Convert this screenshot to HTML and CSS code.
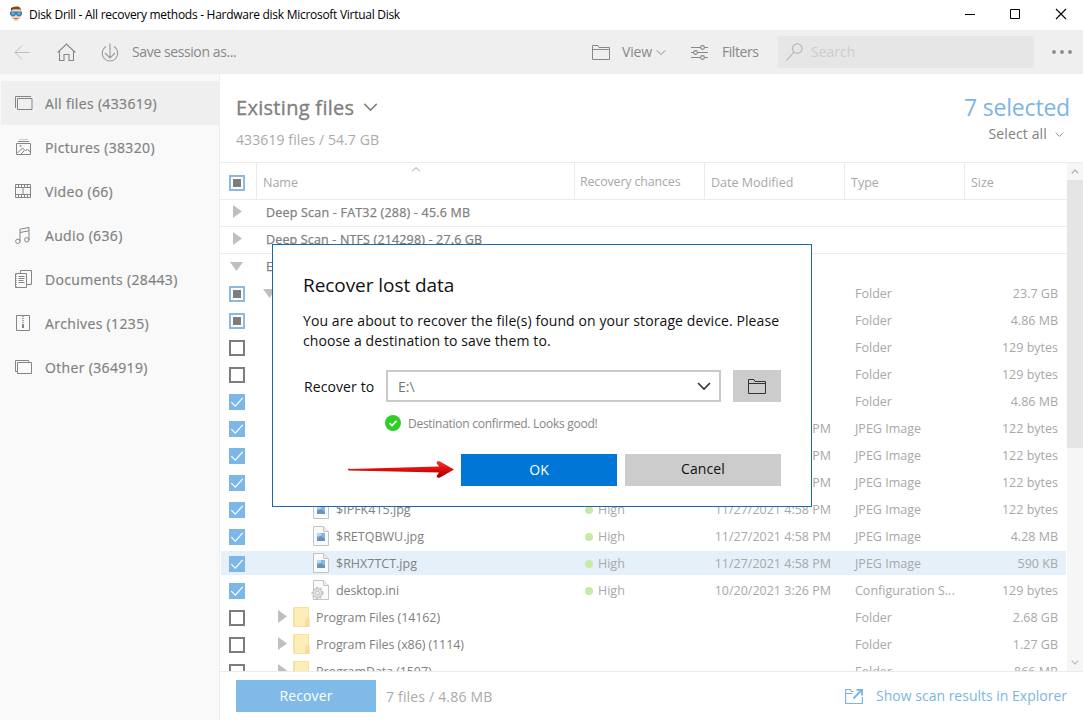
FILE: index.html
```html
<!DOCTYPE html>
<html lang="en">
<head>
<meta charset="utf-8">
<title>Disk Drill</title>
<link rel="stylesheet" href="styles.css">
</head>
<body>
<svg class="defs" width="0" height="0">
  <symbol id="tri-right" viewBox="0 0 9 13"><path d="M0 0v13l9-6.5z" fill="#bfbfbf"/></symbol>
  <symbol id="tri-down" viewBox="0 0 13 9"><path d="M0 0h13l-6.5 9z" fill="#bfbfbf"/></symbol>
  <symbol id="chev-down" viewBox="0 0 12 8"><path d="M1 1.5l5 5 5-5" fill="none" stroke="currentColor" stroke-width="1.2"/></symbol>
  <symbol id="tick" viewBox="0 0 16 16"><path d="M2.3 8.2l4 4 7.4-8.4" fill="none" stroke="#fff" stroke-width="1.2"/></symbol>
  <symbol id="jpg" viewBox="0 0 16 20">
    <path d="M.5.5h10l5 5v14H.5z" fill="#fafafa" stroke="#c4c4c4"/><path d="M10.500.5v5h5" fill="#eee" stroke="#c4c4c4"/>
    <path d="M4 7h8v8H4z" fill="#83b7e3"/><path d="M4 12l4-2 4 3v2H4z" fill="#6b93b8"/><path d="M4 7h4v3H4z" fill="#b3d7f2"/>
  </symbol>
  <symbol id="ini" viewBox="0 0 18 20">
    <path d="M2.500.5h10l5 5v14h-15z" fill="#fafafa" stroke="#c4c4c4"/><path d="M12.500.5v5h5" fill="#eee" stroke="#c4c4c4"/>
    <circle cx="6.500" cy="13" r="5" fill="#e3e3e3" stroke="#c0c0c0" stroke-width="2" stroke-dasharray="2.2 1.4"/><circle cx="6.500" cy="13" r="4.200" fill="#e4e4e4" stroke="#c6c6c6" stroke-width=".8"/><circle cx="6.500" cy="13" r="1.800" fill="#fff" stroke="#bcbcbc"/>
  </symbol>
  <symbol id="folder" viewBox="0 0 17 20">
    <path d="M.5.5h15v19H.5z" fill="#fdedb9" stroke="#f6e2a0"/><path d="M1 1h1v18H1z" fill="#f5e3a4"/><path d="M13 12l3-1 .5 8.500H12z" fill="#f7dfa0" stroke="#f3d994" stroke-width=".6"/>
  </symbol>
  <symbol id="folder-line" viewBox="0 0 18 15"><path d="M.5 14.500V.500h5.500l1 2h10.500v12zM.500 4.500h17" fill="none" stroke="currentColor"/></symbol>
</svg>

<div class="window">
  <header class="titlebar">
    <svg class="logo" width="12" height="16" viewBox="0 0 12 16">
      <path d="M1 4h10v6q0 3-5 5.500Q1 13 1 10z" fill="#f6d5b8"/><path d="M1 5V2q2-2 7-1.500Q11 1 11 5l-1-1.500H3z" fill="#7b4a22"/>
      <path d="M0 5.500h12v3q-1 2-3 2-2 0-3-2-1 2-3 2-2 0-3-2z" fill="#3c7fae"/><path d="M1.500 6.500h3v2h-3zM7.500 6.500h3v2h-3z" fill="#63bde8"/><path d="M4 12.500h4" stroke="#b9634a"/>
    </svg>
    <h1 class="title">Disk Drill - All recovery methods - Hardware disk Microsoft Virtual Disk</h1>
    <svg class="winctl" width="108" height="12" viewBox="0 0 108 12" fill="none" stroke="#000">
      <path d="M0 6.500h10M45.500 1.500h9v9h-9z"/><path d="M91 1l10 10M101 1L91 11" stroke-width="1.100"/>
    </svg>
  </header>

  <nav class="toolbar">
    <svg class="back" width="16" height="16" viewBox="0 0 16 16" fill="none" stroke="#bcbcbc"><path d="M15.500 8.500H1M8 1.500l-7 7 7 7"/></svg>
    <svg class="home" width="19" height="18" viewBox="0 0 19 18" fill="none" stroke="#888" stroke-width="1.100"><path d="M.7 9.500L9.500 1l8.800 8.500M2.500 8v9.500h4.500v-6h5v6h4.500V8"/></svg>
    <svg class="save" width="18" height="19" viewBox="0 0 18 19" fill="none" stroke="#999" stroke-width="1.100"><path d="M5 3.500a7.800 7.800 0 1 0 8 0M9 .5v14M4 10l5 5 5-5"/></svg>
    <span class="tool save-label">Save session as...</span>
    <svg class="view-ico" width="18" height="15"><use href="#folder-line"/></svg>
    <span class="tool view-label">View</span>
    <svg class="view-chev" width="10" height="7"><use href="#chev-down"/></svg>
    <svg class="filter-ico" width="17" height="15" viewBox="0 0 17 15" fill="none" stroke="#888" stroke-width="1.100"><path d="M0 2.500h9.500M13.500 2.500H17M0 7.500h2.500M6.500 7.500H17M0 12.500h9.500M13.500 12.500H17"/><circle cx="11.500" cy="2.500" r="1.900"/><circle cx="4.500" cy="7.500" r="1.900"/><circle cx="11.500" cy="12.500" r="1.900"/></svg>
    <span class="tool filter-label">Filters</span>
    <div class="search">
      <svg width="17" height="18" viewBox="0 0 17 18" fill="none" stroke="#b5b5b5" stroke-width="1.100"><circle cx="11.300" cy="5.500" r="4.800"/><path d="M8 9.200L.5 17.500"/></svg>
      <span>Search</span>
    </div>
    <svg class="more" width="20" height="4" viewBox="0 0 20 4" fill="#8a8a8a"><circle cx="2" cy="2" r="1.900"/><circle cx="10" cy="2" r="1.900"/><circle cx="18" cy="2" r="1.900"/></svg>
  </nav>

  <div class="body">
    <aside class="sidebar">
      <a class="cat active"><svg viewBox="0 0 18 18"><path d="M.5 14V2.500H16M2.500 4.500h14.500v11H2.500z"/></svg><span>All files (433619)</span></a>
      <a class="cat"><svg viewBox="0 0 18 18"><path d="M1.500 5.500h14v11h-14zM3 3.500h11M2.500 15l5-5 3 3 2-2 3 3.500M6 16l3-3"/><path d="M4 1.500h9" stroke="#ccc"/><circle cx="5.500" cy="8" r=".6"/></svg><span>Pictures (38320)</span></a>
      <a class="cat"><svg viewBox="0 0 18 18"><path d="M.5 2.500h15v13H.5zM.5 5.500h15M.5 12.500h15M8 5.500v7M3.500 2.500v3M6.500 2.500v3M9.500 2.500v3M12.500 2.500v3M3.500 12.500v3M6.500 12.500v3M9.500 12.500v3M12.500 12.500v3"/></svg><span>Video (66)</span></a>
      <a class="cat"><svg viewBox="0 0 18 18"><circle cx="2.800" cy="15.300" r="2.200"/><circle cx="11.800" cy="13.800" r="2.200"/><path d="M5 15.500V3.200L14 1.500V14M5 6.500L14 4.800"/></svg><span>Audio (636)</span></a>
      <a class="cat"><svg viewBox="0 0 18 18"><path d="M5.500 3.500v-3h11v14h-5M.5 3.500h11v14H.5z"/><path d="M3.500 6.500h6M3.500 8.500h6M3.500 10.500h5M3.500 12.500h6"/><path d="M1 4v13" stroke-dasharray="1 1"/></svg><span>Documents (28443)</span></a>
      <a class="cat"><svg viewBox="0 0 18 18"><path d="M1.500 1.500h13v15h-13z"/><path d="M8 2v9" stroke-dasharray="1 1" stroke-width="1.500"/><path d="M8 10v4" stroke-width="2"/></svg><span>Archives (1235)</span></a>
      <a class="cat"><svg viewBox="0 0 18 18"><path d="M2.500 13.500h-2v-11h13l1 2M2.500 4.500h14v11h-14z"/></svg><span>Other (364919)</span></a>
    </aside>

    <main class="main">
      <section class="heading">
        <div>
          <h2 class="heading-title"><span>Existing files</span><svg width="15" height="10"><use href="#chev-down"/></svg></h2>
          <p class="heading-sub">433619 files / 54.7 GB</p>
        </div>
        <div class="selection">
          <p class="selected">7 selected</p>
          <p class="select-all"><span>Select all</span><svg width="9" height="7"><use href="#chev-down"/></svg></p>
        </div>
      </section>

      <section class="table-wrap">
        <div class="table">
          <div class="thead">
            <div class="th"><i class="box part"></i></div>
            <div class="th name"><span>Name</span><svg class="sort" width="10" height="5" viewBox="0 0 10 5"><path d="M1 4.500l4-4 4 4" fill="none" stroke="#999" stroke-width=".9"/></svg></div>
            <div class="th"><span class="lift">Recovery chances</span></div>
            <div class="th">Date Modified</div>
            <div class="th">Type</div>
            <div class="th">Size</div>
          </div>
          <div class="row group"><svg class="gtri" width="9" height="13"><use href="#tri-right"/></svg><span>Deep Scan - FAT32 (288) - 45.6 MB</span></div>
          <div class="row group"><svg class="gtri" width="9" height="13"><use href="#tri-right"/></svg><span class="tight">Deep Scan - NTFS (214298) - 27.6 GB</span></div>
          <div class="row group open"><svg class="gtri down" width="13" height="9"><use href="#tri-down"/></svg><span>Existing</span></div>
          <div class="row"><i class="box part"></i><div class="fname"><svg class="tri0" width="13" height="9"><use href="#tri-down"/></svg></div><span class="chance"></span><span class="date"></span><span class="type">Folder</span><span class="size">23.7 GB</span></div>
          <div class="row"><i class="box part"></i><div class="fname"></div><span class="chance"></span><span class="date"></span><span class="type">Folder</span><span class="size">4.86 MB</span></div>
          <div class="row"><i class="box"></i><div class="fname"></div><span class="chance"></span><span class="date"></span><span class="type">Folder</span><span class="size">129 bytes</span></div>
          <div class="row"><i class="box"></i><div class="fname"></div><span class="chance"></span><span class="date"></span><span class="type">Folder</span><span class="size">129 bytes</span></div>
          <div class="row"><i class="box on"><svg><use href="#tick"/></svg></i><div class="fname"></div><span class="chance"></span><span class="date"></span><span class="type">Folder</span><span class="size">4.86 MB</span></div>
          <div class="row"><i class="box on"><svg><use href="#tick"/></svg></i><div class="fname"></div><span class="chance"></span><span class="date">11/27/2021 4:58 PM</span><span class="type">JPEG Image</span><span class="size">122 bytes</span></div>
          <div class="row"><i class="box on"><svg><use href="#tick"/></svg></i><div class="fname"></div><span class="chance"></span><span class="date">11/27/2021 4:58 PM</span><span class="type">JPEG Image</span><span class="size">122 bytes</span></div>
          <div class="row"><i class="box on"><svg><use href="#tick"/></svg></i><div class="fname"></div><span class="chance"></span><span class="date">11/27/2021 4:58 PM</span><span class="type">JPEG Image</span><span class="size">122 bytes</span></div>
          <div class="row"><i class="box on"><svg><use href="#tick"/></svg></i><div class="fname file"><svg width="16" height="20"><use href="#jpg"/></svg><span>$IPFK415.jpg</span></div><span class="chance high">High</span><span class="date">11/27/2021 4:58 PM</span><span class="type">JPEG Image</span><span class="size">122 bytes</span></div>
          <div class="row"><i class="box on"><svg><use href="#tick"/></svg></i><div class="fname file"><svg width="16" height="20"><use href="#jpg"/></svg><span>$RETQBWU.jpg</span></div><span class="chance high">High</span><span class="date">11/27/2021 4:58 PM</span><span class="type">JPEG Image</span><span class="size">4.28 MB</span></div>
          <div class="row current"><i class="box on"><svg><use href="#tick"/></svg></i><div class="fname file"><svg width="16" height="20"><use href="#jpg"/></svg><span>$RHX7TCT.jpg</span></div><span class="chance high">High</span><span class="date">11/27/2021 4:58 PM</span><span class="type">JPEG Image</span><span class="size">590 KB</span></div>
          <div class="row"><i class="box on"><svg><use href="#tick"/></svg></i><div class="fname file ini"><svg width="18" height="20"><use href="#ini"/></svg><span>desktop.ini</span></div><span class="chance high">High</span><span class="date">10/20/2021 3:26 PM</span><span class="type">Configuration S...</span><span class="size">129 bytes</span></div>
          <div class="row"><i class="box"></i><div class="fname dir"><svg class="tri" width="9" height="13"><use href="#tri-right"/></svg><svg width="17" height="20"><use href="#folder"/></svg><span>Program Files (14162)</span></div><span class="chance"></span><span class="date"></span><span class="type">Folder</span><span class="size">2.68 GB</span></div>
          <div class="row"><i class="box"></i><div class="fname dir"><svg class="tri" width="9" height="13"><use href="#tri-right"/></svg><svg width="17" height="20"><use href="#folder"/></svg><span>Program Files (x86) (1114)</span></div><span class="chance"></span><span class="date"></span><span class="type">Folder</span><span class="size">1.27 GB</span></div>
          <div class="row"><i class="box"></i><div class="fname dir"><svg class="tri" width="9" height="13"><use href="#tri-right"/></svg><svg width="17" height="20"><use href="#folder"/></svg><span>ProgramData (1507)</span></div><span class="chance"></span><span class="date"></span><span class="type">Folder</span><span class="size">866 MB</span></div>
        </div>
        <div class="scrollbar">
          <svg class="up" width="8" height="5" viewBox="0 0 8 5"><path d="M.7 4.300L4 1l3.300 3.300" fill="none" stroke="#aaa" stroke-width="1.200"/></svg>
          <div class="thumb"></div>
          <svg class="dn" width="8" height="5" viewBox="0 0 8 5"><path d="M.7.700L4 4 7.300.700" fill="none" stroke="#bbb" stroke-width="1.200"/></svg>
        </div>
      </section>

      <footer class="footer">
        <button class="recover">Recover</button>
        <span class="summary">7 files / 4.86 MB</span>
        <a class="explorer">
          <svg width="18" height="15" viewBox="0 0 18 15" fill="none" stroke="#7cb5e5" stroke-width="1.200"><path d="M8.500 2.500H6.500l-1-2H.6v14h16.800V8M.6 4.500h7"/><path d="M8.500 9.500L16 1.500M11.500.900h5.500v5.500" stroke-width="1.900"/></svg>
          <span>Show scan results in Explorer</span>
        </a>
      </footer>
    </main>
  </div>

  <div class="dialog">
    <h3>Recover lost data</h3>
    <p class="msg"><span>You are about to recover the file(s) found on your storage device. Please</span><br><span>choose a destination to save them to.</span></p>
    <div class="dest">
      <label>Recover to</label>
      <div class="combo"><span>E:\</span><svg width="14" height="9" viewBox="0 0 14 9"><path d="M1 1l6 6 6-6" fill="none" stroke="#333" stroke-width="1.600"/></svg></div>
      <div class="browse"><svg width="18" height="15"><use href="#folder-line"/></svg></div>
    </div>
    <div class="confirm"><svg width="16" height="16" viewBox="0 0 16 16"><circle cx="8" cy="8" r="8" fill="#2fce25"/><path d="M4.500 8.200l2.500 2.400 4.500-4.800" fill="none" stroke="#fff" stroke-width="1.700"/></svg><span>Destination confirmed. Looks good!</span></div>
    <div class="actions">
      <svg class="arrow" width="107" height="20" viewBox="0 0 107 20">
        <defs><linearGradient id="red" x1="0" y1="0" x2="0" y2="1"><stop offset="0" stop-color="#f23a30"/><stop offset=".5" stop-color="#e00c0c"/><stop offset="1" stop-color="#980000"/></linearGradient></defs>
        <path d="M1 9Q2 8 3 9L92 6.500 89.500 3Q90 0 93 1.500L107 9.500 93 17.500Q90 18.500 89.500 16L92 12.500 3 10.500Q1 11 1 9z" fill="url(#red)"/>
      </svg>
      <button class="ok">OK</button>
      <button class="cancel">Cancel</button>
    </div>
  </div>
</div>
</body>
</html>
```
FILE: styles.css
```css
* { box-sizing: border-box; }
body { margin: 0; font-family: "Open Sans", "Noto Sans", sans-serif; background: #fff; }
h1, h2, h3, p { margin: 0; font-weight: 400; }
button { border: 0; padding: 0; font: inherit; }
svg { display: block; flex: none; }
span, label, h1, h3 { white-space: nowrap; }
.defs { position: absolute; }

.window { position: relative; width: 1083px; height: 720px; overflow: hidden; display: flex; flex-direction: column; }

.titlebar { height: 30px; display: flex; align-items: center; padding: 0 15px 0 10px; }
.logo { margin-top: -3px; }
.title { margin-left: 7px; font-size: 12px; letter-spacing: -0.28px; color: #000; line-height: 16px; }
.winctl { margin-left: auto; margin-right: -5px; margin-top: -2px; }

.toolbar { height: 44px; flex: none; background: #efefef; display: flex; align-items: center; padding: 0 12px 0 14px; color: #888; }
.tool { font-size: 14px; letter-spacing: -0.4px; padding-bottom: 1px; }
.home { margin-left: 27px; }
.save { margin-left: 25px; }
.save-label { margin-left: 13px; width: 120px; }
.view-ico { margin-left: 340px; }
.view-label { margin-left: 12px; width: 31px; letter-spacing: -0.2px; }
.view-chev { margin-left: 3px; }
.filter-ico { margin-left: 25px; }
.filter-label { margin-left: 14px; width: 38px; letter-spacing: -0.45px; }
.search { margin-left: auto; width: 256px; height: 32px; background: #e6e6e6; display: flex; align-items: center; padding-left: 8px; gap: 8px; font-size: 14px; color: #ccc; }
.search span { padding-bottom: 1px; }
.more { margin-left: 18px; margin-right: -1px; }

.body { flex: 1; min-height: 0; display: flex; }
.sidebar { width: 220px; flex: none; background: #f9f9f9; border-right: 1px solid #eee; padding: 7px 0 0 1px; }
.cat { height: 44px; display: flex; align-items: center; padding-left: 14px; gap: 12px; font-size: 14px; letter-spacing: 0.34px; -webkit-text-stroke: 0.2px; color: #808080; }
.cat svg { width: 18px; height: 18px; fill: none; stroke: #858585; }
.cat.active { background: #efefef; }

.main { flex: 1; min-width: 0; display: flex; flex-direction: column; }
.heading { height: 88px; flex: none; display: flex; justify-content: space-between; padding: 18px 13px 0 16px; }
.heading-title { display: flex; align-items: center; gap: 9px; font-size: 20px; letter-spacing: 0.3px; -webkit-text-stroke: 0.35px; line-height: 30px; color: #808080; }
.heading-title span { padding-top: 1px; line-height: 29px; }
.heading-title svg { -webkit-text-stroke: 0; }
.heading-sub { margin-top: 8px; font-size: 14px; letter-spacing: 0.1px; line-height: 20px; color: #aaa; }
.selection { display: flex; flex-direction: column; align-items: flex-end; }
.selected { font-size: 23px; letter-spacing: -0.2px; line-height: 30px; color: #7cb5e5; }
.select-all { display: flex; align-items: center; gap: 8px; margin: 2px 6px 0 0; font-size: 14px; letter-spacing: 0.15px; line-height: 20px; color: #808080; }

.table-wrap { flex: 1; min-height: 0; display: flex; border-top: 1px solid #ebebeb; }
.table { width: 847px; height: 508px; overflow: hidden; font-size: 12.5px; }
.thead, .row { display: grid; grid-template-columns: 37px 318px 130px 140px 120px 102px; }
.thead { height: 37px; border-bottom: 1px solid #ebebeb; color: #a8a8a8; }
.th { display: flex; align-items: center; padding: 3px 0 0 6px; border-right: 1px solid #ebebeb; }
.th:first-child { padding: 4px 0 0 9px; }
.th:last-child { border: 0; }
.th.name { position: relative; }
.sort { position: absolute; left: 154px; top: 4px; }
.lift { margin: -2px 0 0 -1px; letter-spacing: -0.18px; }
.row { height: 27px; line-height: 26px; color: #a8a8a8; }
.row.current { background: linear-gradient(#e5f0fa, #e5f0fa) 1px 0 / 845px 24px no-repeat; }
.row.group { display: flex; border-bottom: 1px solid #ebebeb; color: #808080; letter-spacing: 0.21px; -webkit-text-stroke: 0.25px; }
.row.group.open { border: 0; }
.gtri { margin: 5px 20px 0 13px; width: 9px; }
.gtri.down { width: 13px; margin: 8px 23px 0 10px; }
.group span { margin-left: 4px; }
.group .tight { letter-spacing: 0.16px; }
.group.open span { margin-left: 0; }
.box { width: 16px; height: 16px; border: 2px solid #7d7d7d; flex: none; }
.row .box { margin: 5px 0 0 9px; }
.box.part { border-color: #8bb9df; background: #7d7d7d content-box; padding: 2px; }
.box.on { border: 0; background: #7db7e8; }
.box svg { width: 16px; height: 16px; }
.fname { display: flex; color: #808080; }
.tri0 { margin: 8px 0 0 6px; }
.file { padding-left: 56px; }
.file svg { margin: 2px 7px 0 0; }
.file.ini { padding-left: 54px; letter-spacing: -0.1px; }
.dir { padding-left: 21px; letter-spacing: -0.09px; }
.dir .tri { margin: 5px 6px 0 0; }
.dir svg { margin: 2px 6px 0 0; }
.chance.high::before { content: ""; display: inline-block; width: 8px; height: 8px; margin: 0 5px 0 10px; border-radius: 50%; background: #c5eba5; }
.date { text-align: right; padding-right: 14px; }
.type { padding-left: 10px; }
.size { text-align: right; padding-right: 9px; }

.scrollbar { width: 16px; background: #f6f6f6; display: flex; flex-direction: column; align-items: center; }
.up { margin-top: 6px; }
.thumb { width: 16px; height: 268px; margin-top: 6px; background: #e5e5e5; }
.dn { margin-top: auto; margin-bottom: 6px; }

.footer { height: 49px; flex: none; border-top: 1px solid #ebebeb; display: flex; align-items: center; padding: 0 16px; font-size: 14px; }
.recover { width: 140px; height: 32px; padding-bottom: 2px; letter-spacing: 0.1px; background: #7fbae9; color: #fff; }
.summary { margin-left: 10px; letter-spacing: 0.18px; color: #aaa; }
.explorer { margin-left: auto; display: flex; align-items: center; gap: 13px; color: #7cb5e5; }
.explorer span { padding-bottom: 2px; }

.dialog { position: absolute; left: 272px; top: 244px; width: 540px; height: 263px; border: 1px solid #1a6aab; background: #fff; padding: 26px 30px 0; color: #111; font-size: 14px; }
.dialog h3 { font-size: 19px; letter-spacing: -0.06px; line-height: 28px; }
.msg { margin-top: 12px; letter-spacing: 0.1px; line-height: 20px; }
.dest { margin-top: 19px; height: 32px; display: flex; align-items: center; }
.dest label { width: 83px; padding-left: 1px; letter-spacing: 0.1px; }
.combo { width: 335px; height: 32px; border: 2px solid #c9c9c9; display: flex; align-items: center; justify-content: space-between; padding: 0 8px 0 10px; color: #777; }
.browse { margin-left: auto; width: 48px; height: 32px; background: #ccc; display: flex; align-items: center; justify-content: center; color: #333; }
.confirm { margin: 12px 0 0 82px; display: flex; align-items: center; gap: 7px; height: 18px; font-size: 12px; letter-spacing: -0.27px; color: #858585; }
.actions { display: flex; align-items: center; margin: 22px 0 0 45px; }
.arrow { margin-left: -1px; }
.ok, .cancel { width: 156px; height: 32px; }
.ok { margin-left: 7px; padding-bottom: 2px; background: #0076d7; color: #fff; }
.cancel { margin-left: 8px; padding-bottom: 3px; letter-spacing: 0.1px; background: #ccc; color: #111; }
```
